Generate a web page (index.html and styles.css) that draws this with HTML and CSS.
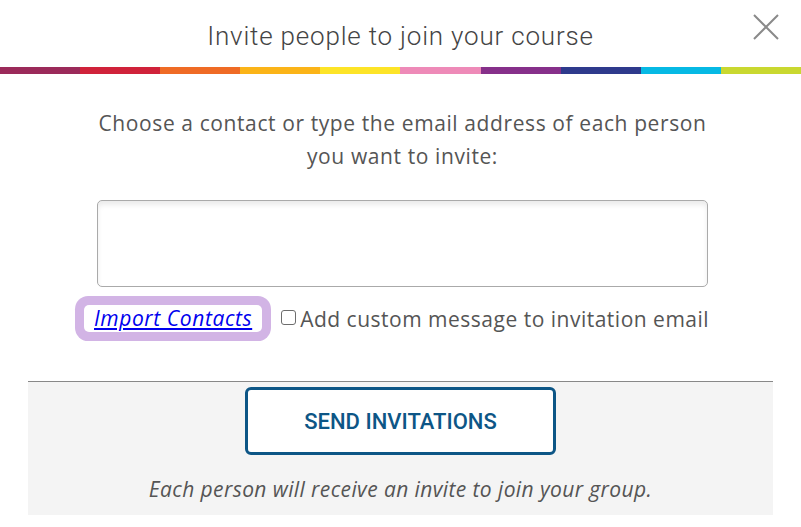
FILE: index.html
```html
<!DOCTYPE html>
<html>
<head lang="en">
	<meta charset="UTF-8">
	<title>Invite people</title>
	<link rel="stylesheet" href="styles.css">
</head>
<body>

<div class="modal">
	<header class="modal-head">
		<h1>Invite people to join your course</h1>
		<button class="close" aria-label="Close">
			<svg width="26" height="26" viewBox="0 0 26 26">
				<path d="M1 1 L25 25 M25 1 L1 25" stroke="#8a8a8a" stroke-width="2" fill="none"/>
			</svg>
		</button>
	</header>

	<ul class="rainbow">
		<li class="c1"></li>
		<li class="c2"></li>
		<li class="c3"></li>
		<li class="c4"></li>
		<li class="c5"></li>
		<li class="c6"></li>
		<li class="c7"></li>
		<li class="c8"></li>
		<li class="c9"></li>
		<li class="c10"></li>
	</ul>

	<section class="modal-body">
		<p class="lead">Choose a contact or type the email address of each person you want to invite:</p>
		<textarea class="emails"></textarea>
		<div class="options">
			<a class="import" href="#">Import Contacts</a>
			<label class="custom"><input type="checkbox">Add custom message to invitation email</label>
		</div>
	</section>

	<footer class="modal-foot">
		<button class="send">SEND INVITATIONS</button>
		<p class="note">Each person will receive an invite to join your group.</p>
	</footer>
</div>

</body>
</html>
```

FILE: styles.css
```css
* {
	box-sizing: border-box;
	margin: 0;
	padding: 0;
}

body {
	background: #fff;
	font-family: "Open Sans", "Noto Sans", sans-serif;
	color: #555;
}

.modal {
	width: 801px;
}

.modal-head {
	position: relative;
	height: 67px;
	display: flex;
	align-items: center;
	justify-content: center;
}

.modal-head h1 {
	font-family: Roboto, sans-serif;
	font-weight: 300;
	font-size: 26px;
	letter-spacing: 0.8px;
	color: #444;
	padding-top: 5px;
}

.close {
	position: absolute;
	top: 14px;
	right: 22px;
	border: 0;
	background: none;
	width: 26px;
	height: 26px;
}

.rainbow {
	list-style: none;
	display: flex;
	height: 7px;
}

.rainbow li {
	flex: 1 0 0;
}

.c1 { background: #9b2a5a; }
.c2 { background: #d0223a; }
.c3 { background: #ef6b25; }
.c4 { background: #fbb418; }
.c5 { background: #fde428; }
.c6 { background: #ee8ab8; }
.c7 { background: #86308a; }
.c8 { background: #2e3a8c; }
.c9 { background: #06b9e4; }
.c10 { background: #c9d830; }

.modal-body {
	width: 611px;
	margin-left: 97px;
	padding-top: 33px;
}

.lead {
	font-size: 21px;
	letter-spacing: 0.6px;
	line-height: 33px;
	text-align: center;
	margin: 0 -10px;
}

.emails {
	display: block;
	width: 611px;
	height: 87px;
	margin-top: 27px;
	border: 1px solid #aaa;
	border-radius: 5px;
	box-shadow: inset 0 4px 5px rgba(0, 0, 0, 0.08);
	resize: none;
}

.options {
	display: flex;
	align-items: center;
	margin: 18px 0 0 -13px;
	height: 27px;
	white-space: nowrap;
}

.import {
	font-size: 21px;
	font-style: italic;
	letter-spacing: 0.6px;
	color: #0000ee;
	padding: 0 10px;
	line-height: 27px;
	border-radius: 5px;
	background: #fff;
	box-shadow: 0 0 0 9px #d2b4e5;
}

.custom {
	display: flex;
	align-items: center;
	margin-left: 19px;
	font-size: 21px;
	letter-spacing: 0.5px;
}

.custom input {
	appearance: none;
	width: 15px;
	height: 15px;
	margin: 0 4px 3px 0;
	border: 1px solid #6d6d6d;
	border-radius: 3px;
	background: #fff;
}

.modal-foot {
	margin: 49px 28px 0;
	border-top: 1px solid #888;
	background: #f4f4f4;
	height: 134px;
	display: flex;
	flex-direction: column;
	align-items: center;
}

.send {
	margin-top: 5px;
	width: 311px;
	height: 68px;
	border: 3px solid #0d5686;
	border-radius: 6px;
	background: #fff;
	color: #0d5686;
	font-family: Roboto, sans-serif;
	font-weight: 500;
	font-size: 22px;
}

.note {
	margin-top: 20px;
	font-size: 21px;
	font-style: italic;
	letter-spacing: 0.4px;
}
```
